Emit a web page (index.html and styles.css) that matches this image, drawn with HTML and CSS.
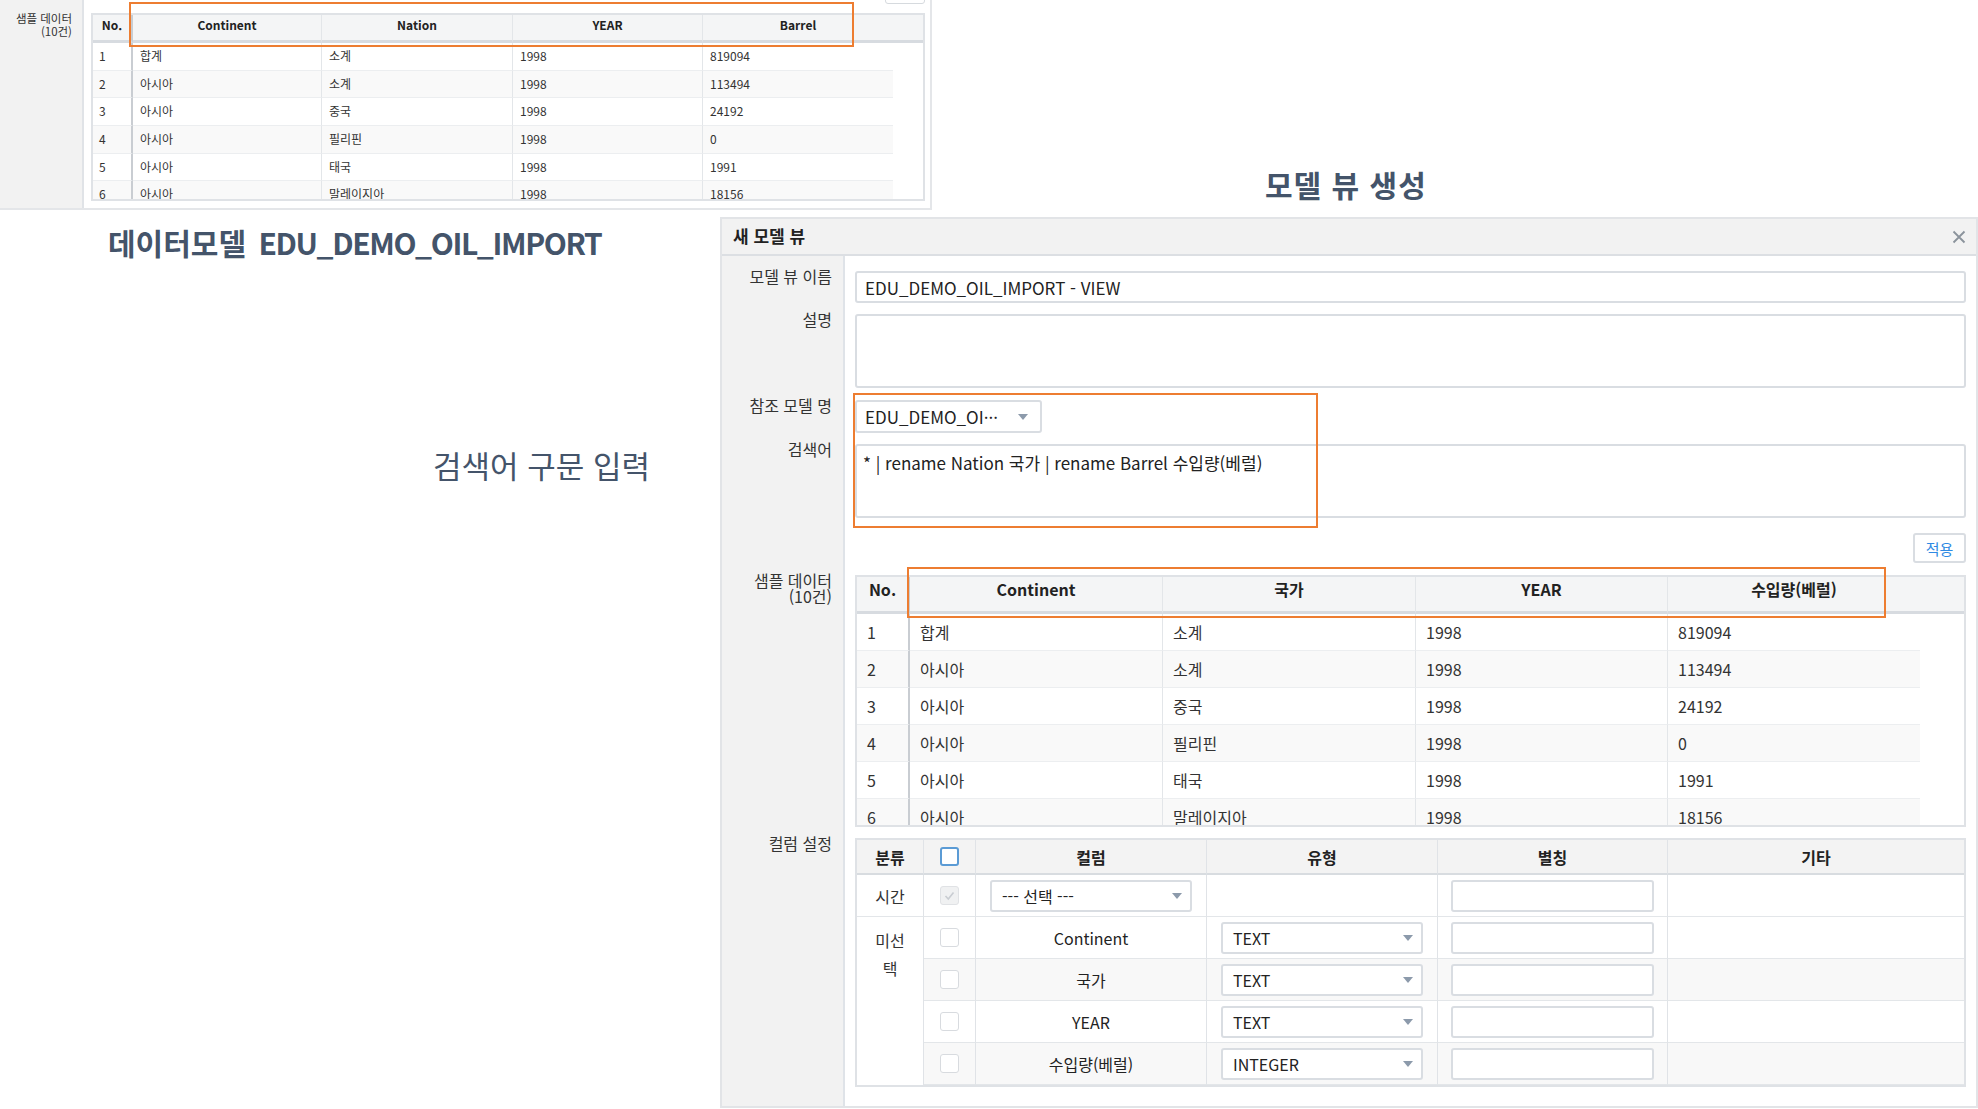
FILE: index.html
```html
<!DOCTYPE html>
<html lang="ko">
<head>
<meta charset="utf-8">
<title>모델 뷰 생성</title>
<link rel="stylesheet" href="styles.css">
</head>
<body>
<div class="page">
  <div class="top-row">
    <section class="mini-panel">
      <div class="mini-side">
        <div class="mini-label">샘플 데이터<br>(10건)</div>
      </div>
      <div class="mini-main">
        <div class="mini-btn-row"><span class="mini-btn"></span></div>
        <div class="mini-grid">
          <div class="mg-row mg-head">
            <span>No.</span><span>Continent</span><span>Nation</span><span>YEAR</span><span>Barrel</span><span class="fill"></span>
          </div>
          <div class="mg-row"><span>1</span><span>합계</span><span>소계</span><span>1998</span><span>819094</span><span class="fill"></span></div>
          <div class="mg-row alt"><span>2</span><span>아시아</span><span>소계</span><span>1998</span><span>113494</span><span class="fill"></span></div>
          <div class="mg-row"><span>3</span><span>아시아</span><span>중국</span><span>1998</span><span>24192</span><span class="fill"></span></div>
          <div class="mg-row alt"><span>4</span><span>아시아</span><span>필리핀</span><span>1998</span><span>0</span><span class="fill"></span></div>
          <div class="mg-row"><span>5</span><span>아시아</span><span>태국</span><span>1998</span><span>1991</span><span class="fill"></span></div>
          <div class="mg-row alt"><span>6</span><span>아시아</span><span>말레이지아</span><span>1998</span><span>18156</span><span class="fill"></span></div>
        </div>
      </div>
      <div class="callout callout-mini"></div>
    </section>
    <div class="heading-area">
      <h2 class="slide-heading">모델 뷰 생성</h2>
    </div>
  </div>

  <div class="bottom-row">
    <div class="notes">
      <h1 class="slide-title">데이터모델 <span class="title-latin">EDU_DEMO_OIL_IMPORT</span></h1>
      <p class="slide-note">검색어 구문 입력</p>
    </div>

    <section class="dialog">
      <header class="dlg-head">
        <h3 class="dlg-title">새 모델 뷰</h3>
        <span class="dlg-close">
          <svg width="14" height="14" viewBox="0 0 14 14"><path d="M1.5 1.5 L12.5 12.5 M12.5 1.5 L1.5 12.5" stroke="#8b939c" stroke-width="1.8" fill="none"/></svg>
        </span>
      </header>
      <div class="dlg-body">
        <label class="f-label">모델 뷰 이름</label>
        <div class="f-field"><input class="text-input" type="text" value="EDU_DEMO_OIL_IMPORT - VIEW"></div>

        <label class="f-label">설명</label>
        <div class="f-field"><textarea class="text-area"></textarea></div>

        <label class="f-label f-gap">참조 모델 명</label>
        <div class="f-field f-gap">
          <div class="select select-model"><span>EDU_DEMO_OI···</span><svg class="caret" width="10" height="6" viewBox="0 0 10 6"><path d="M0 0 H10 L5 6 Z" fill="#8c9aab"/></svg></div>
        </div>

        <label class="f-label">검색어</label>
        <div class="f-field"><textarea class="text-area query">* | rename Nation 국가 | rename Barrel 수입량(베럴)</textarea></div>

        <div class="f-label f-gap-l"></div>
        <div class="f-field f-actions f-gap-l"><button class="btn-apply" type="button">적용</button></div>

        <label class="f-label f-gap">샘플 데이터<br>(10건)</label>
        <div class="f-field f-gap">
          <div class="sample-grid">
            <div class="sg-row sg-head">
              <span>No.</span><span>Continent</span><span>국가</span><span>YEAR</span><span>수입량(베럴)</span><span class="fill"></span>
            </div>
            <div class="sg-row"><span>1</span><span>합계</span><span>소계</span><span>1998</span><span>819094</span><span class="fill"></span></div>
            <div class="sg-row alt"><span>2</span><span>아시아</span><span>소계</span><span>1998</span><span>113494</span><span class="fill"></span></div>
            <div class="sg-row"><span>3</span><span>아시아</span><span>중국</span><span>1998</span><span>24192</span><span class="fill"></span></div>
            <div class="sg-row alt"><span>4</span><span>아시아</span><span>필리핀</span><span>1998</span><span>0</span><span class="fill"></span></div>
            <div class="sg-row"><span>5</span><span>아시아</span><span>태국</span><span>1998</span><span>1991</span><span class="fill"></span></div>
            <div class="sg-row alt"><span>6</span><span>아시아</span><span>말레이지아</span><span>1998</span><span>18156</span><span class="fill"></span></div>
          </div>
        </div>

        <label class="f-label">컬럼 설정</label>
        <div class="f-field">
          <div class="cols-grid">
            <div class="cg-row cg-head">
              <span>분류</span>
              <span><i class="cb cb-active"></i></span>
              <span>컬럼</span>
              <span>유형</span>
              <span>별칭</span>
              <span>기타</span>
            </div>
            <div class="cg-row">
              <span class="cg-cat">시간</span>
              <span><i class="cb cb-checked"><svg width="11" height="10" viewBox="0 0 11 10"><path d="M1.5 5 L4.3 8 L9.5 1.5" stroke="#c9cdd2" stroke-width="1.6" fill="none"/></svg></i></span>
              <span><span class="select select-cell"><span>--- 선택 ---</span><svg class="caret" width="10" height="6" viewBox="0 0 10 6"><path d="M0 0 H10 L5 6 Z" fill="#8c9aab"/></svg></span></span>
              <span></span>
              <span><span class="alias-input"></span></span>
              <span></span>
            </div>
            <div class="cg-row">
              <span class="cg-cat cg-unsel">미선택</span>
              <span><i class="cb"></i></span>
              <span>Continent</span>
              <span><span class="select select-cell"><span>TEXT</span><svg class="caret" width="10" height="6" viewBox="0 0 10 6"><path d="M0 0 H10 L5 6 Z" fill="#8c9aab"/></svg></span></span>
              <span><span class="alias-input"></span></span>
              <span></span>
            </div>
            <div class="cg-row alt">
              <span><i class="cb"></i></span>
              <span>국가</span>
              <span><span class="select select-cell"><span>TEXT</span><svg class="caret" width="10" height="6" viewBox="0 0 10 6"><path d="M0 0 H10 L5 6 Z" fill="#8c9aab"/></svg></span></span>
              <span><span class="alias-input"></span></span>
              <span></span>
            </div>
            <div class="cg-row">
              <span><i class="cb"></i></span>
              <span>YEAR</span>
              <span><span class="select select-cell"><span>TEXT</span><svg class="caret" width="10" height="6" viewBox="0 0 10 6"><path d="M0 0 H10 L5 6 Z" fill="#8c9aab"/></svg></span></span>
              <span><span class="alias-input"></span></span>
              <span></span>
            </div>
            <div class="cg-row alt">
              <span><i class="cb"></i></span>
              <span>수입량(베럴)</span>
              <span><span class="select select-cell"><span>INTEGER</span><svg class="caret" width="10" height="6" viewBox="0 0 10 6"><path d="M0 0 H10 L5 6 Z" fill="#8c9aab"/></svg></span></span>
              <span><span class="alias-input"></span></span>
              <span></span>
            </div>
          </div>
        </div>
      </div>
      <div class="callout callout-query"></div>
      <div class="callout callout-head"></div>
    </section>
  </div>
</div>
</body>
</html>
```

FILE: styles.css
```css
* { box-sizing: border-box; }
html, body { margin: 0; padding: 0; }
body {
  width: 1978px;
  height: 1109px;
  overflow: hidden;
  background: #fff;
  font-family: "Noto Sans CJK KR", "Noto Sans", sans-serif;
  color: #333;
}
.page { display: flex; flex-direction: column; height: 1109px; }

/* ---------- top row ---------- */
.top-row { display: flex; height: 217px; flex: none; }

.mini-panel {
  position: relative;
  width: 932px;
  height: 210px;
  flex: none;
  display: flex;
  border-right: 2px solid #e4e6e9;
  border-bottom: 2px solid #e4e6e9;
  overflow: hidden;
}
.mini-side {
  width: 84px;
  flex: none;
  background: #f2f2f2;
  border-right: 2px solid #e0e3e7;
  padding: 12px 10px 0 0;
  text-align: right;
  font-size: 11.5px;
  line-height: 12.5px;
  color: #333;
}
.mini-main { flex: 1; padding: 0 5px 0 7px; }
.mini-btn-row { display: flex; justify-content: flex-end; margin-top: -19px; }
.mini-btn {
  width: 40px; height: 23px;
  border: 1.5px solid #d6dade;
  border-radius: 3px;
  background: #fff;
}
.mini-grid {
  margin-top: 9px;
  height: 188px;
  border: 2px solid #dfe2e6;
  overflow: hidden;
  font-size: 12px;
  color: #333;
}
.mg-row {
  display: grid;
  grid-template-columns: 40px 189px 191px 190px 190px 1fr;
  height: 27.7px;
}
.mg-row > span {
  border-right: 1px solid #e3e6e9;
  border-bottom: 1px solid #eceef0;
  padding-left: 7px;
  line-height: 26.7px;
  white-space: nowrap;
}
.mg-row > span:first-child { border-right: 2px solid #c9cdd2; padding-left: 6px; }
.mg-row > span:nth-last-child(2) { border-right: none; }
.mg-row > .fill { border: none; background: #fff; }
.mg-row.alt > span:not(.fill) { background: #f9f9f9; }
.mg-head { height: 28px; background: #f4f5f6; }
.mg-head > span {
  border-bottom: 3px solid #d7dbe0;
  font-weight: 700;
  text-align: center;
  padding-left: 0;
  line-height: 19px;
  color: #222;
}
.mg-head > span:first-child { padding-left: 0; }
.mg-head > .fill { background: #f4f5f6; border-bottom: 3px solid #d7dbe0; }

.heading-area { flex: 1; padding: 166px 0 0 333px; }
.slide-heading {
  margin: 0;
  font-size: 30px;
  line-height: 36px;
  font-weight: 700;
  color: #44546a;
  letter-spacing: 1px;
  white-space: nowrap;
}

/* ---------- bottom row ---------- */
.bottom-row { display: flex; flex: 1; min-height: 0; }
.notes { width: 720px; flex: none; }
.slide-title {
  margin: 7px 0 0;
  padding-left: 108px;
  font-size: 30px;
  line-height: 36px;
  font-weight: 700;
  color: #44546a;
  white-space: nowrap;
}
.title-latin { letter-spacing: -1.4px; margin-left: 4px; }
.slide-note {
  margin: 187px 0 0;
  padding-left: 433px;
  font-size: 31px;
  line-height: 36px;
  font-weight: 400;
  color: #44546a;
  white-space: nowrap;
}

/* ---------- dialog ---------- */
.dialog {
  position: relative;
  width: 1258px;
  height: 891px;
  flex: none;
  border: 2px solid #e2e4e7;
  display: flex;
  flex-direction: column;
}
.dlg-head {
  height: 37px;
  flex: none;
  background: #f2f2f2;
  border-bottom: 2px solid #dcdfe3;
  display: flex;
  align-items: center;
  justify-content: space-between;
  padding: 0 10px 0 11px;
}
.dlg-title { margin: -2px 0 0; font-size: 17px; font-weight: 700; color: #222; }
.dlg-close { display: flex; }

.dlg-body {
  flex: 1;
  display: grid;
  grid-template-columns: 123px 1fr;
  row-gap: 11px;
  align-content: start;
  padding: 15px 10px 0 0;
  background: linear-gradient(to right, #f2f2f2 0 121px, #dfe3e8 121px 123px, #fff 123px);
}
.f-label {
  text-align: right;
  padding-right: 13px;
  margin-top: -3px;
  font-size: 16px;
  line-height: 16px;
  color: #333;
}
.f-field { padding-left: 10px; }
.f-gap { margin-top: 1px; }
.f-label.f-gap { margin-top: -2px; }
.f-gap-l { margin-top: 4px; }

.text-input, .text-area {
  display: block;
  width: 100%;
  border: 2px solid #d9dde2;
  border-radius: 3px;
  background: #fff;
  font-family: inherit;
  color: #222;
  outline: none;
}
.text-input { height: 32px; padding: 0 8px; font-size: 17px; }
.text-area { height: 74px; resize: none; padding: 6px 6px; font-size: 17px; line-height: 21px; }

.select {
  display: flex;
  align-items: center;
  justify-content: space-between;
  height: 33px;
  border: 2px solid #d9dde2;
  border-radius: 3px;
  background: #fff;
  font-size: 17px;
  color: #222;
  padding: 0 12px 0 8px;
  white-space: nowrap;
}
.select-model { width: 187px; }
.caret { flex: none; }

.f-actions { display: flex; justify-content: flex-end; }
.btn-apply {
  width: 53px;
  height: 30px;
  border: 2px solid #d9dde2;
  border-radius: 3px;
  background: #fff;
  font-family: inherit;
  font-size: 15px;
  color: #2f8ae3;
  padding: 0;
}

/* sample grid */
.sample-grid {
  height: 252px;
  border: 2px solid #dfe2e6;
  overflow: hidden;
  font-size: 16px;
  color: #333;
}
.sg-row {
  display: grid;
  grid-template-columns: 53px 253px 253px 252px 252px 1fr;
  height: 37px;
}
.sg-row > span {
  border-right: 1px solid #e3e6e9;
  border-bottom: 1px solid #eceef0;
  padding-left: 10px;
  line-height: 36px;
  white-space: nowrap;
}
.sg-row > span:first-child { border-right: 2px solid #c9cdd2; }
.sg-row > span:nth-last-child(2) { border-right: none; }
.sg-row > .fill { border: none; background: #fff; }
.sg-row.alt > span:not(.fill) { background: #f9f9f9; }
.sg-head { background: #f4f5f6; }
.sg-head > span {
  border-bottom: 3px solid #d7dbe0;
  font-weight: 700;
  text-align: center;
  padding-left: 0;
  line-height: 25px;
  color: #222;
}
.sg-head > .fill { background: #f4f5f6; border-bottom: 3px solid #d7dbe0; }

/* column settings */
.cols-grid {
  display: grid;
  grid-template-columns: 67px 52px 231px 231px 230px 1fr;
  grid-template-rows: 35px repeat(5, 42px);
  border: 2px solid #dfe2e6;
  font-size: 16px;
  color: #222;
}
.cg-row { display: contents; }
.cg-row > span {
  display: flex;
  align-items: center;
  justify-content: center;
  border-right: 1px solid #e0e3e7;
  border-bottom: 1px solid #e3e6e9;
  background: #fff;
  white-space: nowrap;
}
.cg-row > span:last-child { border-right: none; }
.cg-row.alt > span { background: #f8f8f8; }
.cg-head > span {
  background: #f3f3f3;
  border-bottom: 2px solid #d8dce0;
  font-weight: 700;
}
.cg-cat { color: #333; }
.cg-unsel {
  grid-row: span 4;
  align-items: flex-start !important;
  white-space: normal !important;
  padding: 9px 11px 0;
  line-height: 28px;
  text-align: center;
  border-bottom: none !important;
}
.cb {
  display: flex;
  align-items: center;
  justify-content: center;
  width: 19px;
  height: 19px;
  border: 1.5px solid #d8dbdf;
  border-radius: 3px;
  background: #fff;
}
.cb-active { border: 2px solid #5b9bd5; }
.cb-checked { background: #f0f1f2; border-color: #e0e2e5; }
.select-cell { width: 202px; height: 32px; padding: 0 8px 0 10px; font-size: 16px; }
.alias-input {
  display: block;
  width: 203px;
  height: 32px;
  border: 2px solid #d9dde2;
  border-radius: 3px;
  background: #fff;
}

/* orange annotation boxes */
.callout {
  position: absolute;
  border: 2px solid #ed7d31;
  pointer-events: none;
}
.callout-mini { left: 129px; top: 2px; width: 725px; height: 45px; }
.callout-query { left: 131px; top: 174px; width: 465px; height: 135px; }
.callout-head { left: 185px; top: 348px; width: 979px; height: 51px; }
```
